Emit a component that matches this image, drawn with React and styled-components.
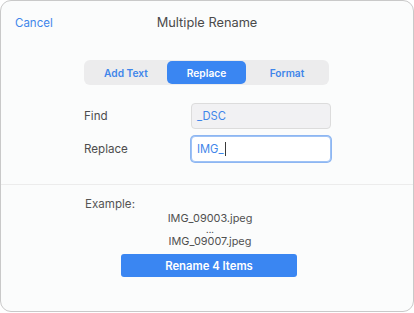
import React from "react";
import styled, { createGlobalStyle } from "styled-components";

const GlobalStyle = createGlobalStyle`
  html, body {
    margin: 0;
    padding: 0;
    background: #ffffff;
  }
  body {
    font-family: Inter, "Noto Sans", sans-serif;
    -webkit-font-smoothing: antialiased;
  }
`;

const TABS = ["Add Text", "Replace", "Format"];

const App = () => {
  return (
    <>
      <GlobalStyle />
      <Sheet>
        <Header>
          <CancelButton>Cancel</CancelButton>
          <Title>Multiple Rename</Title>
        </Header>

        <Segmented>
          {TABS.map((tab) => (
            <Segment key={tab} $active={tab === "Replace"}>
              {tab}
            </Segment>
          ))}
        </Segmented>

        <Form>
          <FieldRow>
            <Label>Find</Label>
            <Field>_DSC</Field>
          </FieldRow>
          <FieldRow>
            <Label>Replace</Label>
            <Field $focused>
              IMG_
              <Caret />
            </Field>
          </FieldRow>
        </Form>

        <Divider />

        <Preview>
          <ExampleLabel>Example:</ExampleLabel>
          <FileName>IMG_09003.jpeg</FileName>
          <Ellipsis>...</Ellipsis>
          <FileName>IMG_09007.jpeg</FileName>
          <RenameButton>Rename 4 Items</RenameButton>
        </Preview>
      </Sheet>
    </>
  );
};

export default App;

export const Sheet = styled.div`
  box-sizing: border-box;
  width: 414px;
  height: 312px;
  border: 1px solid #c9c9c9;
  border-radius: 11px;
  background: #fbfcfc;
  display: flex;
  flex-direction: column;
  overflow: hidden;
`;

export const Header = styled.div`
  position: relative;
  display: flex;
  align-items: center;
  justify-content: center;
  height: 42px;
  padding-top: 1px;
`;

export const CancelButton = styled.button`
  position: absolute;
  left: 14px;
  top: 15px;
  border: none;
  background: none;
  padding: 0;
  font-family: inherit;
  font-size: 11.5px;
  color: #3f86ea;
  cursor: pointer;
`;

export const Title = styled.div`
  font-size: 12.8px;
  color: #4a4a4a;
  margin-top: -2px;
`;

export const Segmented = styled.div`
  align-self: center;
  display: grid;
  grid-template-columns: 82px 79px 82px;
  margin-top: 16px;
  margin-left: -1px;
  padding: 1px 1px;
  height: 23px;
  background: #ececed;
  border-radius: 6px;
`;

export const Segment = styled.div`
  display: flex;
  align-items: center;
  justify-content: center;
  border-radius: 5px;
  font-size: 10.2px;
  font-weight: 600;
  color: ${(p) => (p.$active ? "#ffffff" : "#3f86ea")};
  background: ${(p) => (p.$active ? "#3a86f2" : "transparent")};
`;

export const Form = styled.div`
  display: flex;
  flex-direction: column;
  gap: 7px;
  padding: 18px 0 0 83px;
`;

export const FieldRow = styled.div`
  display: flex;
  align-items: center;
`;

export const Label = styled.div`
  width: 107px;
  font-size: 11.6px;
  color: #4d4d4d;
`;

export const Field = styled.div`
  box-sizing: border-box;
  width: 140px;
  height: 26px;
  display: flex;
  align-items: center;
  padding-left: ${(p) => (p.$focused ? "5px" : "5px")};
  font-size: 11.2px;
  color: #3f86ea;
  background: ${(p) => (p.$focused ? "#ffffff" : "#f1f1f3")};
  border: 1px solid ${(p) => (p.$focused ? "#9ec2f5" : "#dcdcdc")};
  box-shadow: ${(p) => (p.$focused ? "0 0 0 1px #8db6f2" : "none")};
  border-radius: 4px;
`;

export const Caret = styled.span`
  display: inline-block;
  width: 1px;
  height: 14px;
  margin-left: 1px;
  background: #3a3a3a;
`;

export const Divider = styled.div`
  height: 1px;
  margin-top: 22px;
  background: #ececec;
`;

export const Preview = styled.div`
  display: flex;
  flex-direction: column;
  align-items: center;
  padding-top: 11px;
`;

export const ExampleLabel = styled.div`
  align-self: flex-start;
  margin-left: 84px;
  font-size: 11.6px;
  color: #555555;
  line-height: 16px;
`;

export const FileName = styled.div`
  font-size: 10.9px;
  color: #505050;
  line-height: 13px;
  margin-left: 6px;
`;

export const Ellipsis = styled.div`
  font-size: 9px;
  color: #505050;
  line-height: 10px;
  height: 10px;
  margin-left: 6px;
`;

export const RenameButton = styled.button`
  margin-top: 6px;
  margin-left: 4px;
  width: 176px;
  height: 23px;
  border: none;
  border-radius: 3px;
  background: #3a86f2;
  color: #ffffff;
  font-family: inherit;
  font-size: 11.3px;
  font-weight: 600;
  cursor: pointer;
`;
